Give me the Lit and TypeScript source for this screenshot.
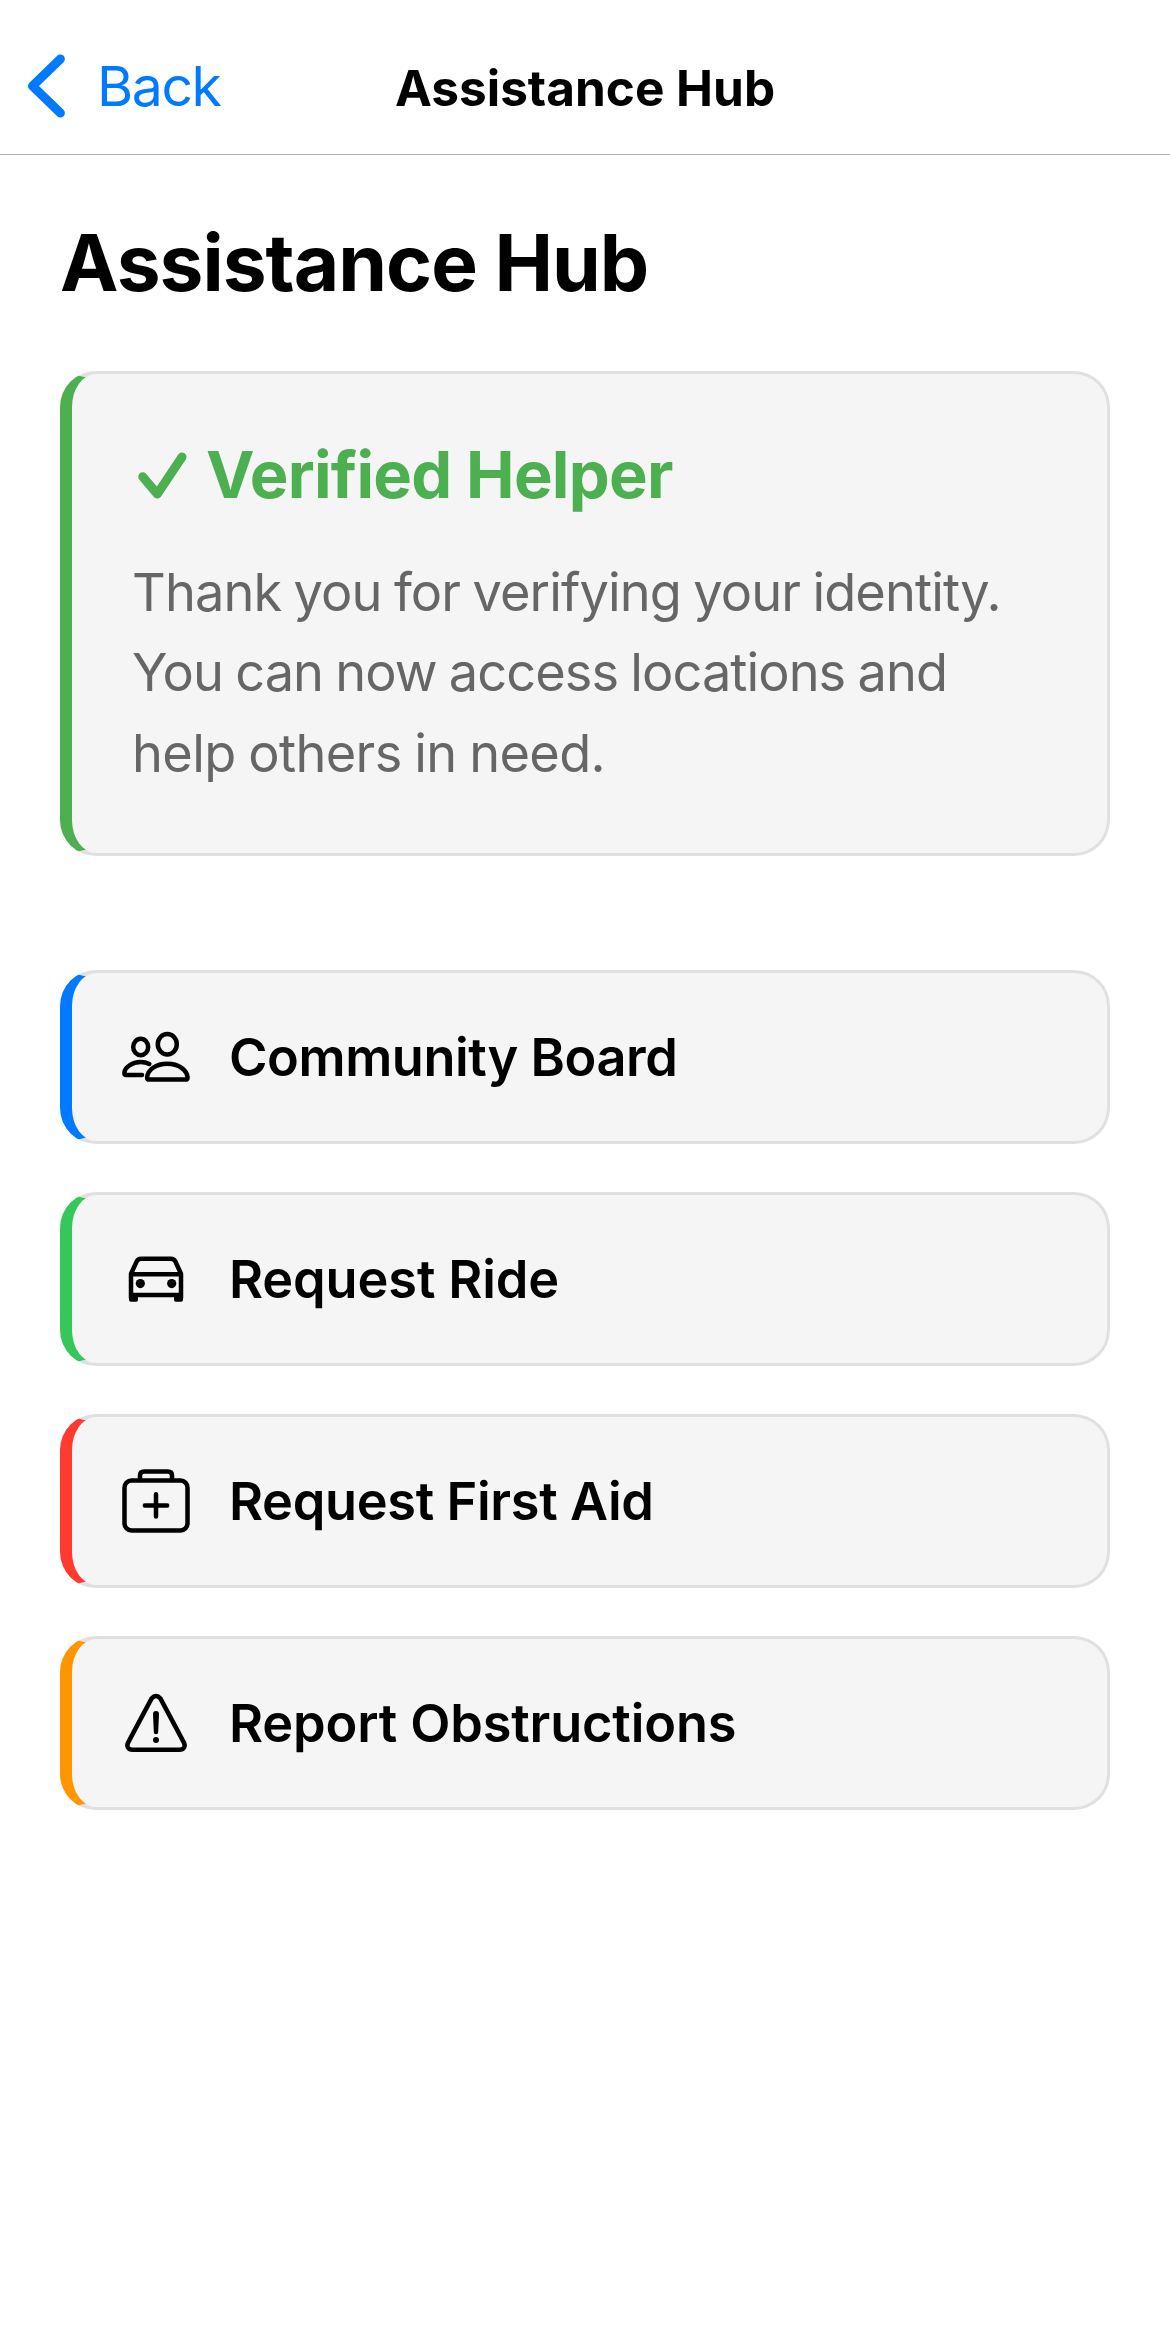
import { LitElement, html, css, svg, type SVGTemplateResult } from "lit";
import { customElement, property } from "lit/decorators.js";
import { styleMap } from "lit/directives/style-map.js";

interface Action {
  label: string;
  accent: string;
  tracking: number;
  icon: SVGTemplateResult;
}

interface Line {
  text: string;
  tracking: number;
}

const peopleIcon = svg`
  <ellipse cx="20.7" cy="26" rx="7.5" ry="8.2" />
  <ellipse cx="47.3" cy="23.3" rx="9.5" ry="10.2" />
  <path d="M29.3 43 C27 41.7 24 41 20.5 41 C12 41 4.5 46.6 4.4 52 Q4.4 54 6.3 54 H22" />
  <path d="M29.4 58.6 Q27.1 58.6 27.1 56.4 C27.5 49 36 42.7 47.3 42.7 C58.6 42.7 67.2 49 67.6 56.4 Q67.6 58.6 65.3 58.6 Z" />
`;

const carIcon = svg`
  <path d="M11 55 V30.8 L16.6 18.6 Q18 15.7 21 15.7 H51 Q54 15.7 55.4 18.6 L61 30.8 V55 M11 31.3 H61 M11 52 H61" />
  <rect class="solid" x="9" y="50.5" width="9" height="8.2" rx="1.8" />
  <rect class="solid" x="54" y="50.5" width="9" height="8.2" rx="1.8" />
  <circle class="solid" cx="20.3" cy="40.6" r="4.6" />
  <circle class="solid" cx="51.7" cy="40.6" r="4.6" />
`;

const firstAidIcon = svg`
  <rect x="4.5" y="15.6" width="63" height="49.9" rx="7" />
  <path d="M20 15 V10.6 Q20 6.5 24.2 6.5 H47.8 Q52 6.5 52 10.6 V15" />
  <path d="M36 29.2 V51.6 M24.8 40.4 H47.2" />
`;

const warningIcon = svg`
  <path d="M31.5 11.6 Q36 6.6 40.5 11.6 L63.8 55.4 C66 59.5 63.6 62.8 59.5 62.8 H12.5 C8.4 62.8 6 59.5 8.2 55.4 Z" />
  <path class="solid" d="M33 27 a3 3 0 0 1 6 0 L38.2 45 a2.2 2.2 0 0 1 -4.4 0 Z" />
  <circle class="solid" cx="36" cy="53" r="3" />
`;

const actions: Action[] = [
  { label: "Community Board", accent: "#007aff", tracking: -0.43, icon: peopleIcon },
  { label: "Request Ride", accent: "#34c759", tracking: -0.13, icon: carIcon },
  { label: "Request First Aid", accent: "#ff3b30", tracking: -0.34, icon: firstAidIcon },
  { label: "Report Obstructions", accent: "#ff9500", tracking: -0.15, icon: warningIcon },
];

const message: Line[] = [
  { text: "Thank you for verifying your identity.", tracking: -0.88 },
  { text: "You can now access locations and", tracking: -0.94 },
  { text: "help others in need.", tracking: -0.62 },
];

@customElement("action-button")
class ActionButton extends LitElement {
  @property({ attribute: false }) action!: Action;

  static styles = css`
    :host {
      display: block;
    }
    .button {
      box-sizing: border-box;
      width: 100%;
      height: 174px;
      display: flex;
      align-items: center;
      gap: 37px;
      margin: 0;
      padding: 48px;
      border: 3px solid #e0e0e0;
      border-left: 12px solid;
      border-radius: 36px;
      background: #f5f5f5;
      color: #000;
      font: inherit;
      font-size: 52.3px;
      font-weight: 600;
      line-height: 72px;
      text-align: left;
      white-space: nowrap;
    }
    .icon {
      flex: none;
      width: 72px;
      height: 72px;
      fill: none;
      stroke: #000;
      stroke-width: 4.5;
      stroke-linecap: round;
      stroke-linejoin: round;
    }
    .icon .solid {
      fill: #000;
      stroke: none;
    }
  `;

  render() {
    const { label, accent, tracking, icon } = this.action;
    return html`
      <button class="button" style=${styleMap({ borderLeftColor: accent })}>
        <svg class="icon" viewBox="0 0 72 72" aria-hidden="true">${icon}</svg>
        <span style=${styleMap({ letterSpacing: `${tracking}px` })}>${label}</span>
      </button>
    `;
  }
}

@customElement("app-root")
class AppRoot extends LitElement {
  static styles = css`
    :host {
      display: block;
      min-height: 2350px;
      background: #fff;
      color: #000;
      font-family: Inter, "Liberation Sans", sans-serif;
    }
    .header {
      box-sizing: border-box;
      height: 155px;
      display: grid;
      grid-template-columns: 1fr auto 1fr;
      align-items: center;
      padding: 17px 24px 0;
      border-bottom: 1px solid #b2b2b2;
    }
    .back {
      display: flex;
      align-items: center;
      gap: 25px;
      color: #007aff;
      font-size: 55.3px;
      line-height: 66px;
      letter-spacing: -1.4px;
    }
    .chevron {
      width: 48px;
      height: 72px;
      fill: none;
      stroke: currentColor;
      stroke-width: 9;
      stroke-linecap: round;
      stroke-linejoin: round;
    }
    .bar-title {
      padding-top: 5px;
      font-size: 49.5px;
      font-weight: 700;
      line-height: 60px;
    }
    .content {
      padding: 60px;
    }
    .title {
      margin: 0 0 61px;
      font-size: 78.4px;
      font-weight: 700;
      line-height: 95px;
      letter-spacing: -1px;
    }
    .card {
      margin-bottom: 114px;
      padding: 60px;
      border: 3px solid #e0e0e0;
      border-left: 12px solid #4caf50;
      border-radius: 36px;
      background: #f5f5f5;
    }
    .card-title {
      display: flex;
      align-items: center;
      gap: 14px;
      margin: 0 0 36.8px;
      color: #4caf50;
      font-size: 65px;
      font-weight: 700;
      line-height: 81px;
      letter-spacing: -0.76px;
    }
    .check {
      width: 60px;
      height: 60px;
      fill: none;
      stroke: currentColor;
      stroke-width: 9;
      stroke-linecap: round;
      stroke-linejoin: round;
    }
    .message {
      margin: 0;
      color: #666;
      font-size: 52.3px;
      line-height: 80.4px;
      word-spacing: -1.5px;
    }
    .line {
      display: block;
      white-space: nowrap;
    }
    .actions {
      display: flex;
      flex-direction: column;
      gap: 48px;
    }
  `;

  render() {
    return html`
      <header class="header">
        <div class="back">
          <svg class="chevron" viewBox="0 0 48 72" aria-hidden="true">
            <path d="M36.4 9 L8.5 36 L36.4 63" />
          </svg>
          <span>Back</span>
        </div>
        <div class="bar-title">Assistance Hub</div>
      </header>
      <main class="content">
        <h1 class="title">Assistance Hub</h1>
        <section class="card">
          <h2 class="card-title">
            <svg class="check" viewBox="0 0 60 60" aria-hidden="true">
              <path d="M10.8 31.8 L25.3 49 L50 12" />
            </svg>
            <span>Verified Helper</span>
          </h2>
          <p class="message">
            ${message.map(
              (l) => html`<span class="line" style=${styleMap({ letterSpacing: `${l.tracking}px` })}>${l.text}</span>`,
            )}
          </p>
        </section>
        <nav class="actions">
          ${actions.map((a) => html`<action-button .action=${a}></action-button>`)}
        </nav>
      </main>
    `;
  }
}
